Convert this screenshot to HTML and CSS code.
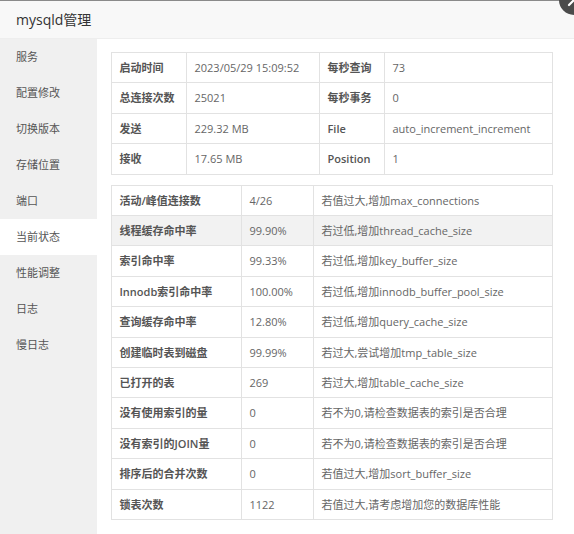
FILE: index.html
```
<!DOCTYPE html>
<html lang="zh">
<head>
<meta charset="utf-8">
<title>mysqld管理</title>
<link rel="stylesheet" href="styles.css">
</head>
<body>
<div class="layer">
  <div class="layer-title">mysqld管理</div>
  <a class="layer-close" aria-label="关闭">
    <svg width="30" height="30" viewBox="0 0 30 30"><path d="M10 10 L20 20 M20 10 L10 20" stroke="#fff" stroke-width="2.2" stroke-linecap="round"/></svg>
  </a>
  <div class="layer-body">
    <ul class="side-menu">
      <li>服务</li>
      <li>配置修改</li>
      <li>切换版本</li>
      <li>存储位置</li>
      <li>端口</li>
      <li class="active">当前状态</li>
      <li>性能调整</li>
      <li>日志</li>
      <li>慢日志</li>
    </ul>
    <div class="content">
      <table class="grid info">
        <colgroup><col class="c1"><col class="c2"><col class="c3"><col class="c4"></colgroup>
        <tr><th>启动时间</th><td>2023/05/29 15:09:52</td><th>每秒查询</th><td>73</td></tr>
        <tr><th>总连接次数</th><td>25021</td><th>每秒事务</th><td>0</td></tr>
        <tr><th>发送</th><td>229.32 MB</td><th>File</th><td>auto_increment_increment</td></tr>
        <tr><th>接收</th><td>17.65 MB</td><th>Position</th><td>1</td></tr>
      </table>
      <table class="grid stats">
        <colgroup><col class="s1"><col class="s2"><col class="s3"></colgroup>
        <tr><th>活动/峰值连接数</th><td>4/26</td><td>若值过大,增加max_connections</td></tr>
        <tr class="hover"><th>线程缓存命中率</th><td>99.90%</td><td>若过低,增加thread_cache_size</td></tr>
        <tr><th>索引命中率</th><td>99.33%</td><td>若过低,增加key_buffer_size</td></tr>
        <tr><th>Innodb索引命中率</th><td>100.00%</td><td>若过低,增加innodb_buffer_pool_size</td></tr>
        <tr><th>查询缓存命中率</th><td>12.80%</td><td>若过低,增加query_cache_size</td></tr>
        <tr><th>创建临时表到磁盘</th><td>99.99%</td><td>若过大,尝试增加tmp_table_size</td></tr>
        <tr><th>已打开的表</th><td>269</td><td>若过大,增加table_cache_size</td></tr>
        <tr><th>没有使用索引的量</th><td>0</td><td>若不为0,请检查数据表的索引是否合理</td></tr>
        <tr><th>没有索引的JOIN量</th><td>0</td><td>若不为0,请检查数据表的索引是否合理</td></tr>
        <tr><th>排序后的合并次数</th><td>0</td><td>若值过大,增加sort_buffer_size</td></tr>
        <tr><th>锁表次数</th><td>1122</td><td>若值过大,请考虑增加您的数据库性能</td></tr>
      </table>
    </div>
  </div>
</div>
</body>
</html>
```
FILE: styles.css
```
html, body {
  margin: 0;
  padding: 0;
  background: #fff;
  overflow: hidden;
}
body {
  font-family: "Open Sans", "Noto Sans CJK SC", sans-serif;
  font-size: 11px;
  color: #666;
}
.layer {
  position: relative;
  width: 574px;
  height: 534px;
  display: flex;
  flex-direction: column;
  border-top: 1px solid #8a8a8a;
  box-sizing: border-box;
}
.layer-title {
  height: 37px;
  line-height: 37px;
  padding-left: 16px;
  background: #f8f8f8;
  border-bottom: 1px solid #eee;
  font-size: 14px;
  color: #333;
}
.layer-close {
  position: absolute;
  left: 559px;
  top: -16px;
  width: 30px;
  height: 30px;
  border-radius: 50%;
  background: #4b4b4b;
  display: block;
}
.layer-close svg {
  display: block;
}
.layer-body {
  flex: 1;
  display: flex;
  min-height: 0;
}
.side-menu {
  list-style: none;
  margin: 0;
  padding: 0;
  width: 97px;
  background: #f0f0f0;
  flex: none;
}
.side-menu li {
  height: 36px;
  line-height: 36px;
  padding-left: 16px;
  color: #555;
  font-size: 11px;
}
.side-menu li.active {
  background: #fff;
}
.content {
  flex: 1;
  padding: 13px 0 0 14px;
}
.grid {
  border-collapse: collapse;
  table-layout: fixed;
  width: 441px;
}
.grid th, .grid td {
  border: 1px solid #e2e2e2;
  padding: 5px 7px 5px 7.5px;
  line-height: 19.4px;
  text-align: left;
  white-space: nowrap;
  font-size: 11px;
}
.grid th {
  font-weight: 600;
  color: #555;
}
.grid td {
  color: #666;
  font-weight: 400;
}
.info {
  margin-bottom: 10px;
}
.info col.c1 { width: 75px; }
.info col.c2 { width: 133px; }
.info col.c3 { width: 65px; }
.info col.c4 { width: 168px; }
.stats col.s1 { width: 130px; }
.stats col.s2 { width: 72px; }
.stats col.s3 { width: 239px; }
.stats tr.hover th, .stats tr.hover td {
  background: #f2f2f2;
}
```
